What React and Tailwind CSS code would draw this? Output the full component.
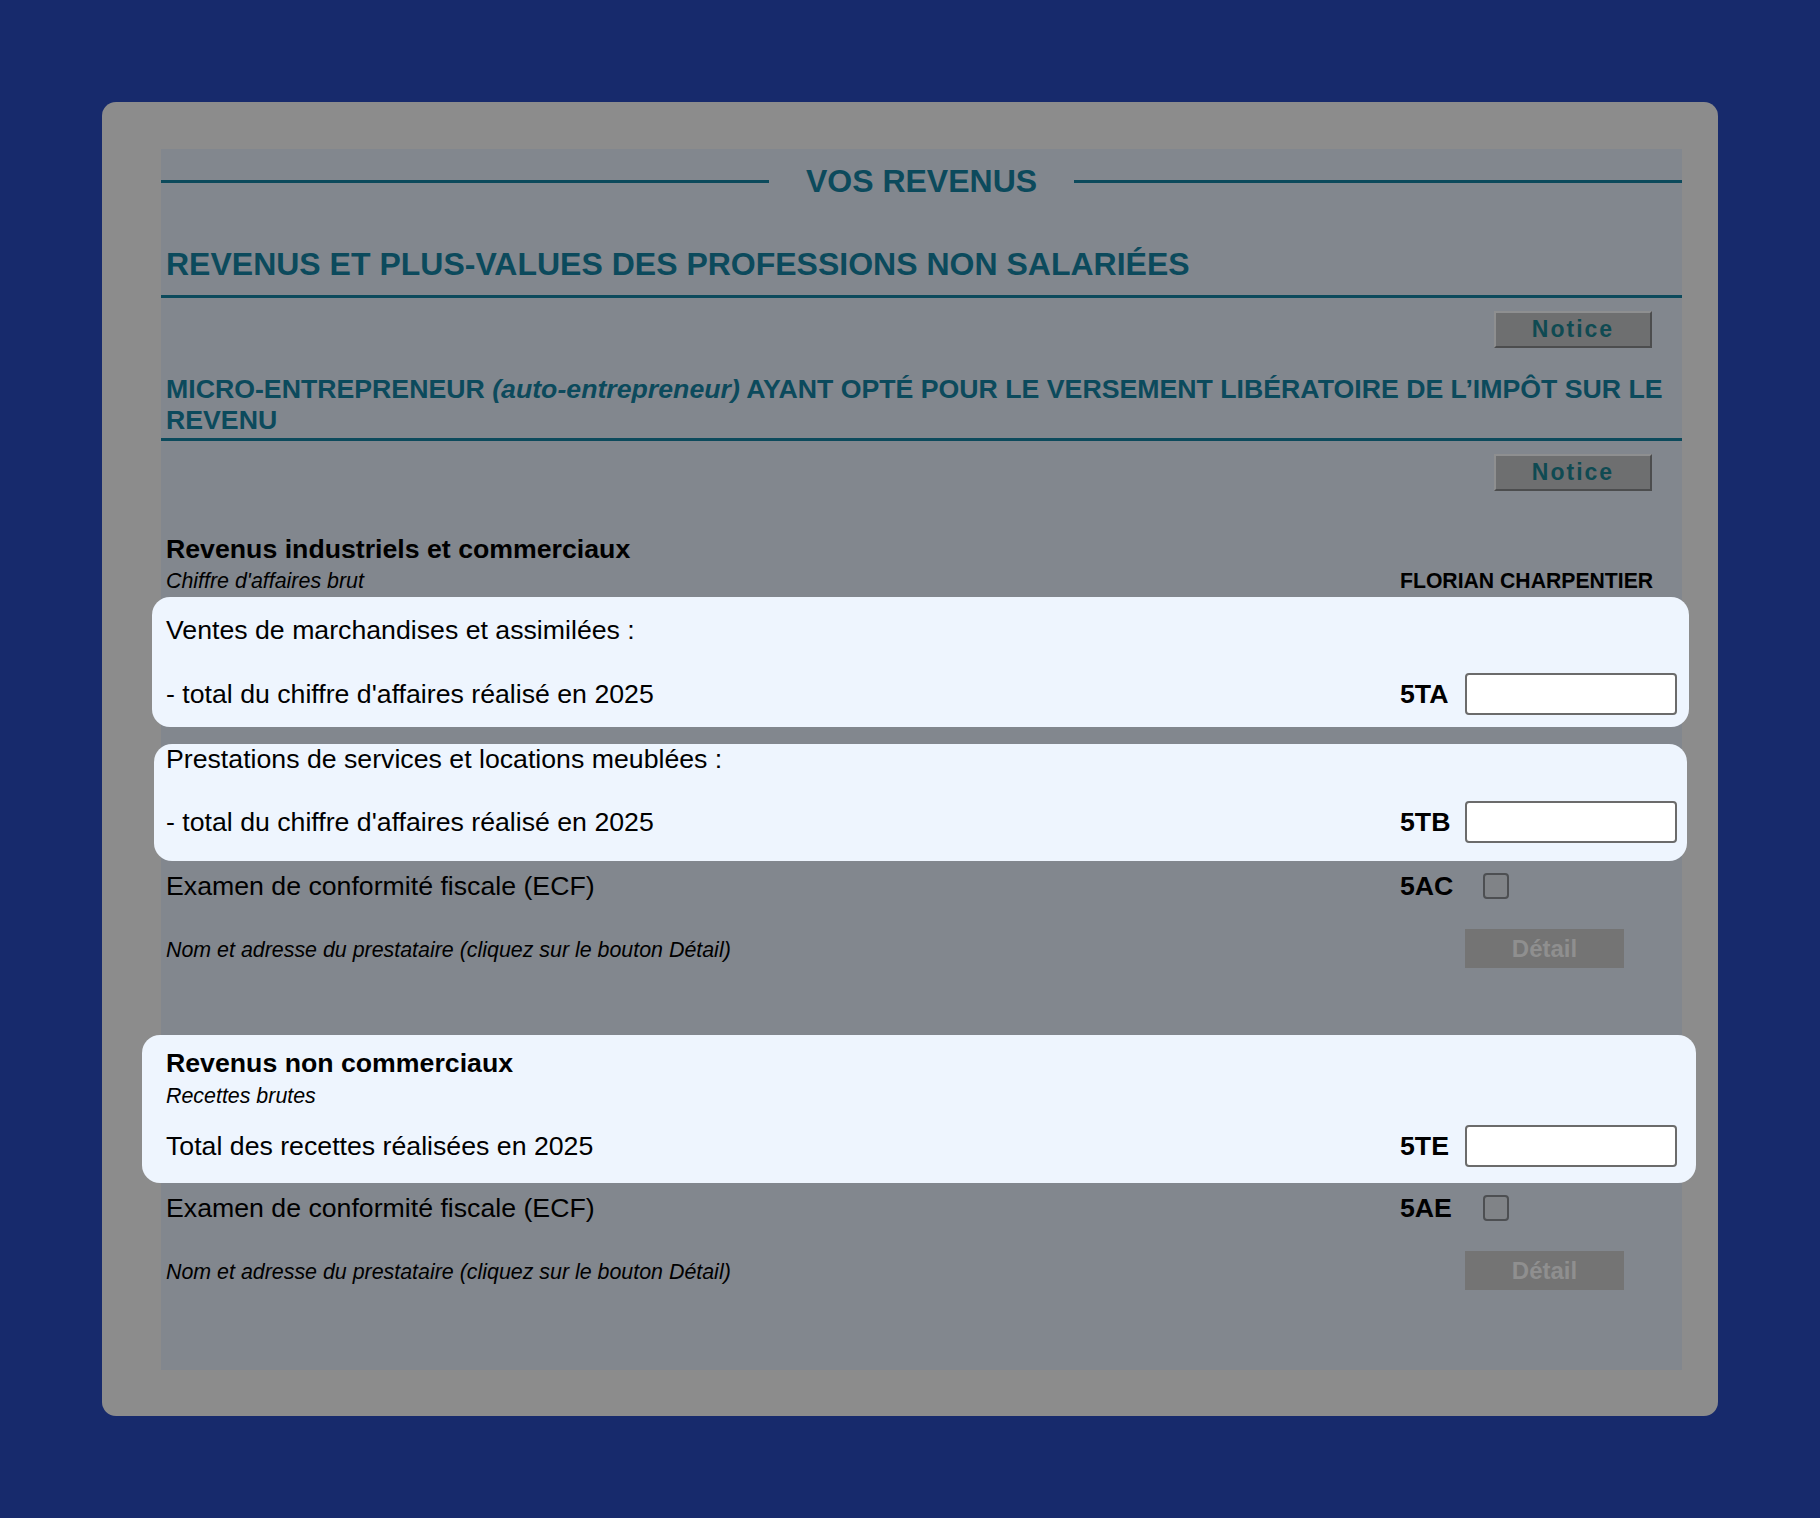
import React from 'react';

const teal = 'text-[#0c4a5c]';

const NoticeButton = () => (
    <button className="w-[158px] h-[37px] bg-[#6e6f70] border-2 border-t-[#8e8f90] border-l-[#8e8f90] border-r-[#4c4d4e] border-b-[#4c4d4e] text-[23px] font-bold tracking-[2px] text-[#0f4a52] leading-none">
        Notice
    </button>
);

const DetailButton = () => (
    <button className="w-[159px] h-[39px] bg-[#747474] text-[24px] font-bold text-[#8f8f8f] leading-none">
        Détail
    </button>
);

const Field = ({ label, code, children, className = '' }) => (
    <div className={`flex items-center ${className}`}>
        <div className="flex-1">{label}</div>
        <div className="w-[65px] font-bold">{code}</div>
        <div className="w-[212px] flex items-center">{children}</div>
    </div>
);

const TextInput = () => (
    <input type="text" className="w-[212px] h-[42px] bg-white border-2 border-[#6b6b6b] rounded-[4px]" />
);

const CheckBox = () => (
    <div className="ml-[18px] w-[26px] h-[26px] border-2 border-[#4d4f52] rounded-[4px] bg-[#808387]" />
);

const App = () => {
    return (
        <div className="min-h-screen h-[1518px] bg-[#172a6c] pt-[102px] pl-[102px]" style={{ fontFamily: '"Liberation Sans", Arial, sans-serif' }}>
            <div className="w-[1616px] h-[1314px] rounded-[14px] bg-[#8c8c8c] pt-[47px] pl-[59px]">
                <div className="w-[1521px] h-[1221px] bg-[#82878e]">
                    {/* title */}
                    <div className="flex items-center h-[64px] gap-[37px]">
                        <div className="flex-1 h-[3px] bg-[#0c4a5c]" />
                        <h1 className={`text-[32px] leading-[37px] font-bold ${teal}`}>VOS REVENUS</h1>
                        <div className="flex-1 h-[3px] bg-[#0c4a5c]" />
                    </div>

                    <div className="border-b-[3px] border-[#0c4a5c] pl-[5px] pt-[33px] pb-[12px]">
                        <h2 className={`text-[32px] leading-[37px] font-bold ${teal}`}>
                            REVENUS ET PLUS-VALUES DES PROFESSIONS NON SALARIÉES
                        </h2>
                    </div>

                    <div className="flex justify-end pr-[30px] mt-[13px]">
                        <NoticeButton />
                    </div>

                    <div className="mt-[26px] border-b-[3px] border-[#0c4a5c] pl-[5px] pb-[2px]">
                        <h3 className={`text-[26.7px] leading-[31px] font-bold ${teal}`}>
                            MICRO-ENTREPRENEUR <i>(auto-entrepreneur)</i> AYANT OPTÉ POUR LE VERSEMENT LIBÉRATOIRE DE L’IMPÔT SUR LE REVENU
                        </h3>
                    </div>

                    <div className="flex justify-end pr-[30px] mt-[13px]">
                        <NoticeButton />
                    </div>

                    <div className="px-[5px] text-[26.7px] leading-[30px] text-black">
                        <div className="mt-[43px] font-bold">Revenus industriels et commerciaux</div>
                        <div className="mt-[4px] flex items-center text-[21.4px] leading-[26px]">
                            <div className="flex-1 italic">Chiffre d'affaires brut</div>
                            <div className="w-[277px] font-bold text-[21.2px]">FLORIAN CHARPENTIER</div>
                        </div>

                        <div className="mt-[3px] -ml-[14px] -mr-[12px] pl-[14px] pr-[12px] pt-[18px] pb-[12px] rounded-[18px] bg-[#eef5fe]">
                            <div>Ventes de marchandises et assimilées :</div>
                            <Field className="mt-[28px]" label="- total du chiffre d'affaires réalisé en 2025" code="5TA">
                                <TextInput />
                            </Field>
                        </div>

                        <div className="mt-[17px] -ml-[12px] -mr-[10px] pl-[12px] pr-[10px] pb-[18px] rounded-[18px] bg-[#eef5fe]">
                            <div>Prestations de services et locations meublées :</div>
                            <Field className="mt-[27px]" label="- total du chiffre d'affaires réalisé en 2025" code="5TB">
                                <TextInput />
                            </Field>
                        </div>

                        <Field className="mt-[10px]" label="Examen de conformité fiscale (ECF)" code="5AC">
                            <CheckBox />
                        </Field>

                        <Field className="mt-[28px] h-[39px]" label={<span className="italic text-[21.4px]">Nom et adresse du prestataire (cliquez sur le bouton Détail)</span>} code="">
                            <DetailButton />
                        </Field>

                        <div className="mt-[67px] -ml-[24px] -mr-[19px] pl-[24px] pr-[19px] pt-[13px] pb-[16px] rounded-[18px] bg-[#eef5fe]">
                            <div className="font-bold">Revenus non commerciaux</div>
                            <div className="mt-[5px] italic text-[21.4px] leading-[26px]">Recettes brutes</div>
                            <Field className="mt-[16px]" label="Total des recettes réalisées en 2025" code="5TE">
                                <TextInput />
                            </Field>
                        </div>

                        <Field className="mt-[10px]" label="Examen de conformité fiscale (ECF)" code="5AE">
                            <CheckBox />
                        </Field>

                        <Field className="mt-[28px] h-[39px]" label={<span className="italic text-[21.4px]">Nom et adresse du prestataire (cliquez sur le bouton Détail)</span>} code="">
                            <DetailButton />
                        </Field>
                    </div>
                </div>
            </div>
        </div>
    );
};

export default App;
